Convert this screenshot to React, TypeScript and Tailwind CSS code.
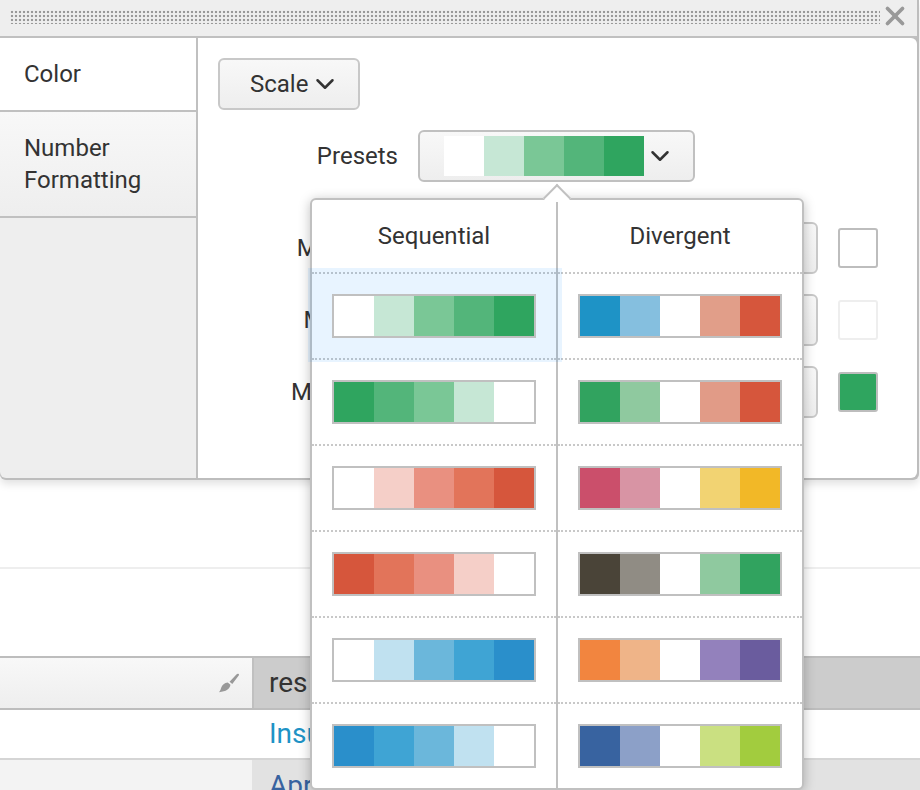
import React from "react";
import { ChevronDown, X } from "lucide-react";

const font = "font-['Roboto',sans-serif]";

const sequential = [
    ["#ffffff", "#c6e7d5", "#7ac796", "#53b57a", "#2fa55f"],
    ["#2fa55f", "#53b57a", "#7ac796", "#c6e7d5", "#ffffff"],
    ["#ffffff", "#f5cfc8", "#e99080", "#e2745a", "#d6563c"],
    ["#d6563c", "#e2745a", "#e99080", "#f5cfc8", "#ffffff"],
    ["#ffffff", "#c0e1f0", "#6bb7db", "#3fa4d4", "#2a8fcb"],
    ["#2a8fcb", "#3fa4d4", "#6bb7db", "#c0e1f0", "#ffffff"],
];

const divergent = [
    ["#1e93c6", "#85bfdf", "#ffffff", "#e19e89", "#d6563c"],
    ["#31a35f", "#8fc99f", "#ffffff", "#e19b87", "#d6563c"],
    ["#cb4f6b", "#d894a4", "#ffffff", "#f2d372", "#f2b827"],
    ["#4a4438", "#908c84", "#ffffff", "#8fc99f", "#31a35f"],
    ["#f2853f", "#efb488", "#ffffff", "#9381bc", "#6a5c9e"],
    ["#3863a0", "#8ca0c8", "#ffffff", "#cae081", "#a2cc3e"],
];

const Ramp: React.FC<{ colors: string[] }> = ({ colors }) => (
    <div className="flex">
        {colors.map((c, i) => (
            <div key={i} className="w-10 h-10" style={{ backgroundColor: c }} />
        ))}
    </div>
);

const FormRow: React.FC<{ label: string; swatch: string; border?: string }> = ({ label, swatch, border }) => (
    <div className="flex items-center h-[52px]">
        <div className="w-[180px] text-right text-[24px] leading-none text-[#333]">{label}</div>
        <div className="ml-5 w-[400px] h-[52px] rounded-md border-2 border-[#c8c8c8] bg-gradient-to-b from-[#f8f8f8] to-[#eee]" />
        <div
            className={`ml-5 w-10 h-10 rounded-[3px] border-2 ${border ?? "border-[#bdbdbd]"}`}
            style={{ backgroundColor: swatch }}
        />
    </div>
);

const PresetColumn: React.FC<{ title: string; rows: string[][] }> = ({ title, rows }) => (
    <div className="w-[244px]">
        <div className="h-[72px] flex items-center justify-center text-[24px] text-[#333]">{title}</div>
        {rows.map((colors, i) => (
            <div key={i} className="h-[86px] flex items-center pl-5 border-t-2 border-dotted border-[#c8c8c8]">
                <div className="relative z-20 border-2 border-[#c0c0c0] bg-white">
                    <Ramp colors={colors} />
                </div>
            </div>
        ))}
    </div>
);

const Popover: React.FC = () => (
    <div className="absolute left-[310px] top-[198px] w-[494px] h-[592px] rounded-md border-2 border-[#c0c0c0] bg-white shadow-[0_2px_12px_rgba(0,0,0,0.25)]">
        <div className="absolute left-[235px] top-[-12px] w-5 h-5 rotate-45 border-l-2 border-t-2 border-[#c0c0c0] bg-white" />
        <div className="relative h-full flex">
            <PresetColumn title="Sequential" rows={sequential} />
            <div className="w-[2px] mt-[2px] bg-[#c0c0c0]" />
            <PresetColumn title="Divergent" rows={divergent} />
        </div>
        {/* hover glow on the first row, runs over the popover border */}
        <div className="absolute z-10 left-[-4px] top-[68px] w-[254px] h-[94px] bg-[rgba(0,130,255,0.09)]" />
    </div>
);

const App: React.FC = () => {
    return (
        <div className={`relative w-[920px] h-[790px] overflow-hidden bg-white ${font}`}>
            {/* dialog */}
            <div className="w-[919px] h-[480px] flex flex-col border-r-2 border-b-2 border-[#bdbdbd] rounded-b-md bg-[#bdbdbd] shadow-[0_4px_8px_rgba(0,0,0,0.12)]">
                <div className="h-[38px] shrink-0 flex items-start pl-[10px] border-b-2 border-[#c0c0c0] bg-[#eee]">
                    <div className="mt-[10px] w-[870px] h-[14px] bg-[radial-gradient(#999_1.2px,transparent_1.6px)] bg-[length:4px_4px]" />
                    <X className="mt-px w-[30px] h-[30px] text-[#999]" strokeWidth={3} />
                </div>
                <div className="flex-1 flex min-h-0">
                    <div className="w-[198px] shrink-0 flex flex-col border-r-2 border-[#c0c0c0] bg-[#eee] rounded-bl-md">
                        <div className="h-[74px] pl-6 pt-[20px] text-[24px] leading-8 text-[#333] bg-white border-b-2 border-[#c0c0c0]">
                            Color
                        </div>
                        <div className="h-[106px] pl-6 pt-[20px] text-[24px] leading-8 text-[#333] bg-gradient-to-b from-[#f8f8f8] to-[#eee] border-b-2 border-[#c0c0c0]">
                            Number<br />Formatting
                        </div>
                    </div>
                    <div className="flex-1 pl-5 pt-5 bg-white rounded-tr-md rounded-br-md">
                        <button className="w-[142px] h-[52px] flex items-center pl-[30px] gap-[2px] rounded-md border-2 border-[#c8c8c8] bg-gradient-to-b from-[#f8f8f8] to-[#eee] text-[24px] text-[#333]">
                            Scale
                            <ChevronDown className="w-[30px] h-[30px]" strokeWidth={2} />
                        </button>
                        <div className="flex items-center mt-5 h-[52px]">
                            <div className="w-[180px] text-right text-[24px] text-[#333]">Presets</div>
                            <div className="ml-5 w-[277px] h-[52px] flex items-center pl-6 rounded-md border-2 border-[#c0c0c0] bg-gradient-to-b from-[#f8f8f8] to-[#eee]">
                                <Ramp colors={sequential[0]} />
                                <ChevronDown className="ml-px w-[30px] h-[30px] text-[#333]" strokeWidth={2} />
                            </div>
                        </div>
                        <div className="mt-10 flex flex-col gap-5">
                            <FormRow label="Minimum" swatch="#ffffff" />
                            <FormRow label="Midpoint" swatch="#ffffff" border="border-[#eee]" />
                            <FormRow label="Maximum" swatch="#2fa55f" />
                        </div>
                    </div>
                </div>
            </div>

            {/* page behind the dialog */}
            <div className="mt-[87px] h-[2px] bg-[#eee]" />
            <div className="mt-[87px] text-[28px] leading-none">
                <div className="flex h-[54px] border-y-2 border-[#bdbdbd]">
                    <div className="w-[254px] flex items-center justify-end pr-[11px] border-r-2 border-[#c0c0c0] bg-gradient-to-b from-[#f8f8f8] to-[#eee]">
                        <svg viewBox="0 0 24 24" className="w-[22px] h-[22px] fill-[#999]">
                            <path d="M21 2c.8.2 1 .8.7 1.500L14.500 13l-3-2.400L19 2.600c.7-.6 1.300-.8 2-.6z" />
                            <path d="M9.500 11.500l3 2.500c-.6 4.500-4.500 7.500-12.500 8 1.500-1.500 1.800-3 2.500-5 .8-3 3.500-5 7-5.500z" />
                        </svg>
                    </div>
                    <div className="flex-1 flex items-center pl-[15px] bg-[#ccc] text-[#333]">res</div>
                </div>
                <div className="flex h-[50px] items-center border-b-2 border-[#d5d5d5]">
                    <div className="w-[269px]" />
                    <div className="text-[#1e93c6]">Insu</div>
                </div>
                <div className="flex h-[40px]">
                    <div className="w-[252px] bg-[#f3f3f3]" />
                    <div className="flex-1 pl-[17px] pt-3 bg-[#e2e2e2] text-[#3863a0]">Apr</div>
                </div>
            </div>

            <Popover />
        </div>
    );
};

export default App;
